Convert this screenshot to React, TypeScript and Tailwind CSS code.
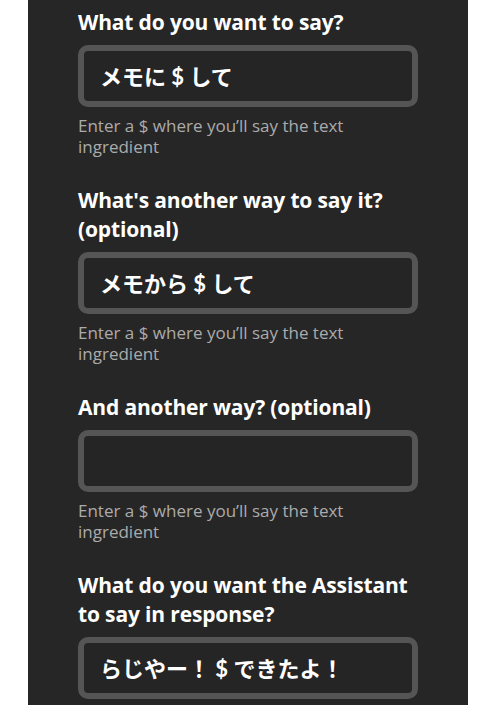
import React from "react"

type Field = {
    label: string[]
    value: string
}

const fields: Field[] = [
    { label: ["What do you want to say?"], value: "メモに $ して" },
    { label: ["What's another way to say it?", "(optional)"], value: "メモから $ して" },
    { label: ["And another way? (optional)"], value: "" },
    { label: ["What do you want the Assistant", "to say in response?"], value: "らじやー！ $ できたよ！" },
]

function FieldBlock({ field, last }: { field: Field; last: boolean }) {
    return (
        <div className={last ? "" : "mb-[29px]"}>
            <h3 className="text-[21px] leading-[29px] font-bold text-white tracking-[-0.15px]">
                {field.label.map((line, i) => (
                    <span key={i} className="block whitespace-nowrap">
                        {line}
                    </span>
                ))}
            </h3>
            <div className="mt-[8px] h-[62px] rounded-[10px] border-[6px] border-[#555555] bg-[#252525] flex items-center pl-[16px]">
                <span className="text-[22px] font-bold text-white font-['Lato','Noto_Sans_CJK_JP',sans-serif]">
                    {field.value}
                </span>
            </div>
            {!last && (
                <p className="mt-[8px] text-[17px] leading-[21px] text-[#ababab]">
                    Enter a $ where you’ll say the text
                    <br />
                    ingredient
                </p>
            )}
        </div>
    )
}

export default function App() {
    return (
        <div className="w-[480px] h-[705px] bg-white overflow-hidden">
            <div className="ml-[28px] w-[440px] h-[705px] bg-[#262626] pl-[50px] pr-[50px] pt-[8px] font-['Open_Sans','Noto_Sans_CJK_JP',sans-serif]">
                {fields.map((f, i) => (
                    <FieldBlock key={i} field={f} last={i === fields.length - 1} />
                ))}
            </div>
        </div>
    )
}
